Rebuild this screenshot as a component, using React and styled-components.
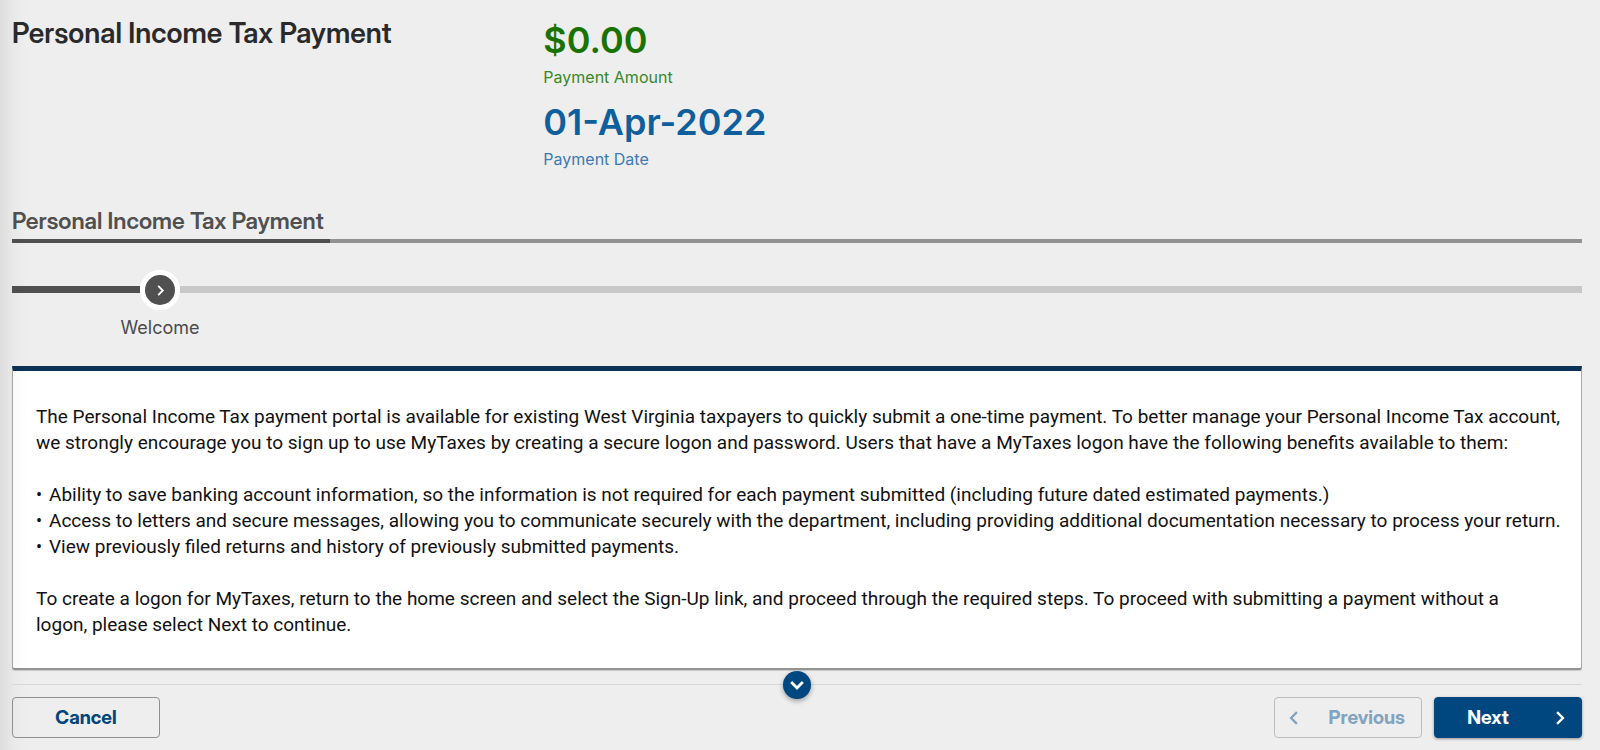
import React from "react";
import styled, { createGlobalStyle } from "styled-components";

const GlobalStyle = createGlobalStyle`
  * {
    box-sizing: border-box;
  }
  body {
    margin: 0;
    background: #eeeeee;
    font-family: Inter, "Liberation Sans", sans-serif;
    color: #111;
  }
`;

const Page = styled.div`
  position: relative;
  min-height: 100vh;
  padding: 16px 18px 12px 12px;
  /* shadow cast by the side menu */
  &::before {
    content: "";
    position: absolute;
    top: 0;
    bottom: 0;
    left: 0;
    width: 28px;
    background: linear-gradient(to right, rgba(0, 0, 0, 0.07), rgba(0, 0, 0, 0.02) 50%, rgba(0, 0, 0, 0));
    pointer-events: none;
  }
`;

const Summary = styled.header`
  display: grid;
  grid-template-columns: 1fr 2fr;
  column-gap: 12px;
  height: 184px;
`;

const Title = styled.h1`
  margin: 0;
  font-family: "Inter Display", Inter, sans-serif;
  font-size: 28px;
  line-height: 34px;
  font-weight: 600;
  color: #2a2a2a;
`;

const Figures = styled.dl`
  display: flex;
  flex-direction: column;
  gap: 8px;
  margin: 0;
`;

const Figure = styled.div`
  display: flex;
  flex-direction: column-reverse;
  color: ${(props) => props.$color};
  > dt {
    font-size: 16px;
    line-height: 26px;
    color: ${(props) => props.$labelColor};
  }
  > dd {
    margin: 0;
    font-size: 36px;
    line-height: 48px;
    font-weight: 600;
  }
`;

const Tabs = styled.nav`
  display: flex;
  border-bottom: 4px solid #929292;
`;

const Tab = styled.a`
  margin-bottom: -4px;
  padding: 6px 6px 2px 0;
  border-bottom: 4px solid #505050;
  font-family: "Inter Display", Inter, sans-serif;
  font-size: 23px;
  line-height: 31px;
  font-weight: 600;
  color: #505050;
  text-decoration: none;
`;

const Steps = styled.ol`
  display: flex;
  margin: 27px 0 0;
  padding: 0;
  list-style: none;
`;

const Bar = styled.li`
  height: 7px;
  margin-top: 16px;
  background: ${(props) => (props.$done ? "#505050" : "#c8c8c8")};
  ${(props) => (props.$done ? "width: 128px;" : "flex: 1;")}
`;

const Step = styled.li`
  display: flex;
  flex-direction: column;
  align-items: center;
  width: 80px;
  margin: 0 -20px;
  font-size: 18px;
  line-height: 26px;
  color: #4a4a4a;
`;

const StepDot = styled.span`
  display: flex;
  align-items: center;
  justify-content: center;
  width: 40px;
  height: 40px;
  margin-bottom: 5px;
  border: 5px solid #fff;
  border-radius: 50%;
  background: #505050;
  color: #fff;
`;

const Card = styled.main`
  margin-top: 25px;
  padding: 33px 20px 30px 23px;
  background: #fff;
  border: 1px solid #a8a8a8;
  border-top: 5px solid #0b3156;
  border-bottom: 2px solid #939592;
  border-radius: 0 0 3px 3px;
  box-shadow: 0 1px 1px rgba(0, 0, 0, 0.15);
  font-family: Roboto, "Liberation Sans", sans-serif;
  font-size: 19px;
  line-height: 26px;
  > p {
    margin: 0;
  }
`;

const Benefits = styled.ul`
  margin: 26px 0;
  padding: 0;
  list-style: none;
  > li {
    display: flex;
  }
  > li::before {
    content: "•";
    width: 13px;
    font-size: 18px;
  }
`;

const Footer = styled.footer`
  position: relative;
  display: flex;
  gap: 12px;
  margin-top: 14px;
  padding-top: 12px;
  border-top: 1px solid #d8d8d8;
`;

const Button = styled.button`
  display: flex;
  align-items: center;
  justify-content: center;
  width: 148px;
  height: 41px;
  padding: 0 16px;
  border: 1px solid #8f8f8f;
  border-radius: 4px;
  background: transparent;
  font-family: "Inter Display", Inter, sans-serif;
  font-size: 19px;
  line-height: 26px;
  font-weight: 700;
  color: #00457c;
  > span {
    flex: 1;
    text-align: center;
  }
`;

const PreviousButton = styled(Button)`
  padding: 0 16px 0 12px;
  margin-left: auto;
  border-color: #bdbdbd;
  color: #84a3be;
  > span {
    text-align: right;
  }
`;

const NextButton = styled(Button)`
  gap: 12px;
  padding: 0 14px 0 0;
  border-color: #00467f;
  background: #00467f;
  box-shadow: 0 1px 3px rgba(0, 0, 0, 0.4);
  color: #fff;
`;

const ScrollButton = styled.button`
  position: absolute;
  top: -14px;
  left: calc(50% - 14px);
  display: flex;
  align-items: center;
  justify-content: center;
  width: 28px;
  height: 28px;
  padding: 0;
  border: none;
  border-radius: 50%;
  background: #00467f;
  box-shadow: 0 2px 5px rgba(0, 0, 0, 0.35);
  color: #fff;
`;

const chevrons = {
  right: "M3.5 1 L8.5 6 L3.5 11",
  left: "M8.5 1 L3.5 6 L8.5 11",
  down: "M1 3.5 L6 8.5 L11 3.5",
};

const Chevron = ({ to, size = 14, stroke = 2 }) => (
  <svg width={size} height={size} viewBox="0 0 12 12" aria-hidden="true">
    <path d={chevrons[to]} fill="none" stroke="currentColor" strokeWidth={stroke} />
  </svg>
);

const benefits = [
  "Ability to save banking account information, so the information is not required for each payment submitted (including future dated estimated payments.)",
  "Access to letters and secure messages, allowing you to communicate securely with the department, including providing additional documentation necessary to process your return.",
  "View previously filed returns and history of previously submitted payments.",
];

const App = () => {
  return (
    <Page>
      <GlobalStyle />
      <Summary>
        <Title>Personal Income Tax Payment</Title>
        <Figures>
          <Figure $color="#1a7300" $labelColor="#38872a">
            <dt>Payment Amount</dt>
            <dd>$0.00</dd>
          </Figure>
          <Figure $color="#0f5f9c" $labelColor="#3c7ab2">
            <dt>Payment Date</dt>
            <dd>01-Apr-2022</dd>
          </Figure>
        </Figures>
      </Summary>
      <Tabs>
        <Tab href="#payment">Personal Income Tax Payment</Tab>
      </Tabs>
      <Steps>
        <Bar $done aria-hidden="true" />
        <Step aria-current="step">
          <StepDot>
            <Chevron to="right" size={11} />
          </StepDot>
          Welcome
        </Step>
        <Bar aria-hidden="true" />
      </Steps>
      <Card>
        <p>
          The Personal Income Tax payment portal is available for existing West Virginia taxpayers
          to quickly submit a one-time payment. To better manage your Personal Income Tax account,
          we strongly encourage you to sign up to use MyTaxes by creating a secure logon and
          password. Users that have a MyTaxes logon have the following benefits available to them:
        </p>
        <Benefits>
          {benefits.map((text) => (
            <li key={text}>{text}</li>
          ))}
        </Benefits>
        <p>
          To create a logon for MyTaxes, return to the home screen and select the Sign-Up link, and
          proceed through the required steps. To proceed with submitting a payment without a
          <br />
          logon, please select Next to continue.
        </p>
      </Card>
      <Footer>
        <ScrollButton type="button" aria-label="Scroll down">
          <Chevron to="down" stroke={2.4} />
        </ScrollButton>
        <Button type="button">Cancel</Button>
        <PreviousButton type="button" disabled>
          <Chevron to="left" />
          <span>Previous</span>
        </PreviousButton>
        <NextButton type="button">
          <span>Next</span>
          <Chevron to="right" />
        </NextButton>
      </Footer>
    </Page>
  );
};

export default App;
